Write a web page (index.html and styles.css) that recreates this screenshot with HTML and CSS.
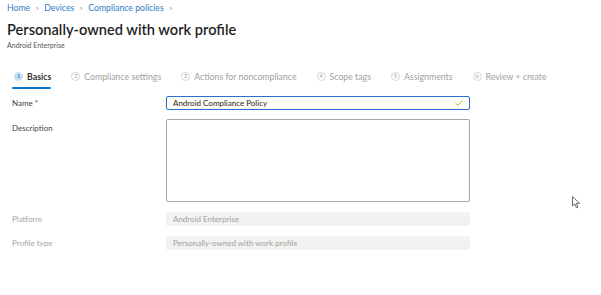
FILE: index.html
```html
<!DOCTYPE html>
<html>
<head>
<meta charset="utf-8">
<link rel="stylesheet" href="styles.css">
</head>
<body>
<div class="page">
  <nav class="crumbs">
    <a>Home</a><span class="sep">&gt;</span><a>Devices</a><span class="sep">&gt;</span><a>Compliance policies</a><span class="sep">&gt;</span>
  </nav>
  <h1 class="title">Personally-owned with work profile</h1>
  <div class="subtitle">Android Enterprise</div>

  <div class="tabs">
    <div class="tab active"><span class="num">1</span><span class="lbl">Basics</span></div>
    <div class="tab"><span class="num">2</span><span class="lbl">Compliance settings</span></div>
    <div class="tab"><span class="num">3</span><span class="lbl">Actions for noncompliance</span></div>
    <div class="tab"><span class="num">4</span><span class="lbl">Scope tags</span></div>
    <div class="tab"><span class="num">5</span><span class="lbl">Assignments</span></div>
    <div class="tab"><span class="num">6</span><span class="lbl">Review + create</span></div>
  </div>

  <div class="form">
    <div class="row">
      <label class="label">Name <span class="req">*</span></label>
      <div class="input focused">
        <span>Android Compliance Policy</span>
        <svg class="check" width="8" height="6" viewBox="0 0 8 6"><path d="M0.5 3.2 L2.8 5.3 L7.5 0.6" fill="none" stroke="#7fba00" stroke-width="0.9"/></svg>
      </div>
    </div>
    <div class="row top">
      <label class="label">Description</label>
      <div class="textarea"></div>
    </div>
    <div class="row disabled">
      <label class="label">Platform</label>
      <div class="input ro">Android Enterprise</div>
    </div>
    <div class="row disabled">
      <label class="label">Profile type</label>
      <div class="input ro">Personally-owned with work profile</div>
    </div>
  </div>

  <svg class="cursor" width="10" height="13" viewBox="0 0 10 13"><path d="M0.5 0.5 L0.5 10 L2.8 7.8 L4.5 11.8 L6 11.2 L4.3 7.3 L7.6 7.3 Z" fill="#fff" stroke="#444" stroke-width="0.8" stroke-linejoin="round"/></svg>
</div>
</body>
</html>
```
FILE: styles.css
```css
* { box-sizing: border-box; }
html, body { margin: 0; padding: 0; background: #fff; }
body {
  font-family: Lato, "Segoe UI", "Noto Sans", sans-serif;
  color: #323130;
  width: 601px;
  height: 295px;
  overflow: hidden;
}
.page { position: relative; padding: 2px 7px 0 7px; }
.crumbs { font-size: 8.7px; line-height: 12px; display: flex; align-items: center; }
.crumbs a { color: #2f7cc4; }
.crumbs .sep { color: #9a9a9a; margin: 0 5px; font-size: 7px; }
.title { font-size: 14.6px; font-weight: 600; margin: 6px 0 0 0; line-height: 19px; color: #1f1f1f; }
.subtitle { font-size: 7px; color: #555; line-height: 10px; margin-top: 1px; }

.tabs { display: flex; margin-top: 21px; padding-left: 7px; height: 20px; }
.tab { display: flex; align-items: flex-start; gap: 4px; margin-right: 20px; position: relative; height: 18px; color: #a19f9d; font-size: 8.75px; line-height: 11px; }
.tab .num { width: 9px; height: 9px; border-radius: 50%; border: 1px solid #d6d6d6; font-size: 5.5px; line-height: 7px; text-align: center; margin-top: 1px; color: #a19f9d; }
.tab.active { color: #323130; font-weight: 700; }
.tab.active .num { background: #c7e0f4; border-color: #c7e0f4; color: #0078d4; font-weight: 600; }
.tab.active::after { content: ""; position: absolute; left: -2px; right: 0; bottom: 0; height: 2px; background: #0078d4; border-radius: 1px; }

.form { margin-top: 5px; padding-left: 5px; display: flex; flex-direction: column; gap: 10px; }
.row { display: flex; align-items: center; }
.row.top { align-items: flex-start; }
.label { width: 154px; font-size: 8px; color: #444; line-height: 10px; }
.row.top .label { margin-top: 3px; }
.req { color: #a4262c; }
.input { width: 304px; height: 14px; border: 1px solid #8a8886; border-radius: 2px; font-size: 8px; padding: 0 6px; display: flex; align-items: center; justify-content: space-between; line-height: 10px; }
.input.focused { border: 1px solid #2b6fd0; background: #fffff8; color: #222; }
.textarea { width: 304px; height: 83px; border: 1px solid #a6a6a6; border-radius: 2px; background: #fff; margin-top: -1px; }
.row.disabled .label { color: #a6a6a6; }
.input.ro { background: #f3f2f1; border-color: #f3f2f1; color: #a19f9d; }
.cursor { position: absolute; left: 572px; top: 196px; }
```
